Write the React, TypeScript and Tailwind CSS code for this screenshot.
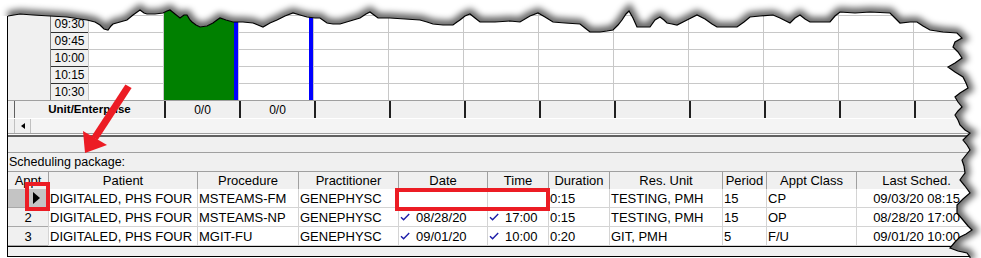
import React from "react";

// top edge + right edge of the torn-paper effect (x,y)
const topEdge: [number, number][] = [
  [8, 16], [20, 14], [33, 15], [50, 16], [67, 17], [80, 19], [87, 20], [95, 22], [100, 25], [104, 29], [108, 30],
  [111, 26], [113, 24], [120, 22], [127, 20], [133, 15], [140, 10], [144, 13], [147, 14], [155, 14], [163, 13],
  [167, 11], [170, 10], [175, 14], [180, 18], [184, 15], [187, 15], [190, 20], [192, 22], [196, 25], [200, 27],
  [207, 26], [213, 23], [217, 20], [220, 18], [226, 20], [233, 22], [243, 22], [253, 23], [258, 25], [263, 27],
  [270, 23], [277, 20], [285, 16], [293, 13], [300, 15], [307, 17], [315, 18], [320, 18], [327, 23], [333, 24],
  [340, 24], [350, 21], [360, 18], [366, 14], [370, 12], [374, 15], [378, 18], [390, 18], [405, 19], [420, 20],
  [427, 22], [433, 24], [443, 25], [453, 25], [457, 22], [460, 20], [465, 16], [470, 14], [475, 18], [480, 22],
  [495, 22], [510, 21], [520, 22], [530, 16], [538, 13], [545, 17], [553, 22], [565, 23], [580, 24], [585, 28],
  [590, 32], [600, 32], [607, 31], [613, 30], [618, 25], [622, 20], [626, 14], [629, 11], [633, 18], [637, 27],
  [645, 27], [650, 27], [655, 20], [660, 17], [664, 20], [667, 23], [672, 24], [677, 25], [687, 20], [697, 15],
  [705, 19], [712, 24], [717, 27], [727, 27], [737, 27], [744, 22], [750, 17], [760, 16], [773, 15], [780, 18],
  [790, 23], [795, 18], [800, 15], [805, 19], [810, 22], [820, 22], [830, 22], [835, 16], [840, 12], [855, 13],
  [870, 12], [890, 13], [895, 18], [900, 23], [910, 22], [917, 22], [923, 26], [930, 30], [943, 32], [957, 33],
  [962, 38],
];
const rightEdge: [number, number][] = [
  [955, 42], [953, 47], [958, 52], [962, 58], [955, 63], [948, 67], [955, 72], [963, 77], [966, 83], [968, 88],
  [960, 93], [955, 97], [958, 102], [962, 107], [958, 111], [955, 115], [958, 120], [960, 125], [965, 130],
  [970, 133], [966, 137], [963, 140], [967, 145], [970, 150], [966, 155], [962, 160], [964, 166], [965, 173],
  [962, 177], [960, 180], [965, 186], [970, 193], [963, 199], [957, 205], [957, 213], [963, 220], [968, 226],
  [972, 230], [966, 234], [960, 237], [955, 242], [950, 248], [958, 251], [967, 253], [970, 257], [970, 259],
];

const edge = [...topEdge, ...rightEdge];
const edgeStr = edge.map((p) => p.join(",")).join(" ");
const outsideStr = `0,0 0,16 ${edgeStr} 981,259 981,0`;

const times = ["09:15", "09:30", "09:45", "10:00", "10:15", "10:30"];
// heights of each time row, borders included
const rowH = ["h-[16px]", "h-[17px]", "h-[17px]", "h-[17px]", "h-[17px]", "h-[16px]"];

// grid columns in the top panel: fill + blue marker
const gridCols = [
  { green: false, blue: false },
  { green: true, blue: true },
  { green: false, blue: true },
  ...Array.from({ length: 9 }, () => ({ green: false, blue: false })),
];

const columns = [
  { key: "appt", label: "Appt", w: "w-[40px]" },
  { key: "patient", label: "Patient", w: "w-[149px]" },
  { key: "procedure", label: "Procedure", w: "w-[101px]" },
  { key: "pract", label: "Practitioner", w: "w-[100px]" },
  { key: "date", label: "Date", w: "w-[89px]" },
  { key: "time", label: "Time", w: "w-[61px]" },
  { key: "duration", label: "Duration", w: "w-[61px]" },
  { key: "unit", label: "Res. Unit", w: "w-[113px]" },
  { key: "period", label: "Period", w: "w-[44px]" },
  { key: "klass", label: "Appt Class", w: "w-[90px]" },
  { key: "last", label: "Last Sched.", w: "w-[120px]" },
];

type Row = {
  appt: string;
  patient: string;
  procedure: string;
  pract: string;
  date: string;
  time: string;
  duration: string;
  unit: string;
  period: string;
  klass: string;
  last: string;
};

const rows: Row[] = [
  { appt: "", patient: "DIGITALED, PHS FOUR", procedure: "MSTEAMS-FM", pract: "GENEPHYSC", date: "", time: "", duration: "0:15", unit: "TESTING, PMH", period: "15", klass: "CP", last: "09/03/20 08:15" },
  { appt: "2", patient: "DIGITALED, PHS FOUR", procedure: "MSTEAMS-NP", pract: "GENEPHYSC", date: "08/28/20", time: "17:00", duration: "0:15", unit: "TESTING, PMH", period: "15", klass: "OP", last: "08/28/20 17:00" },
  { appt: "3", patient: "DIGITALED, PHS FOUR", procedure: "MGIT-FU", pract: "GENEPHYSC", date: "09/01/20", time: "10:00", duration: "0:20", unit: "GIT, PMH", period: "5", klass: "F/U", last: "09/01/20 10:00" },
];

function Check() {
  return (
    <svg width="10" height="8" viewBox="0 0 10 8" className="shrink-0 self-start mt-[5px]">
      <path d="M1 4.2 L3.6 6.8 L9.2 1" fill="none" stroke="#1c1ca8" strokeWidth="1.4" />
    </svg>
  );
}

function TimeGrid() {
  return (
    <div className="flex h-[101px] border-b border-[#a0a0a0]">
      <div className="w-[43px] shrink-0 bg-[#f0f0f0] border-r border-[#808080]" />
      <div className="w-[37px] shrink-0 flex flex-col bg-[#f0f0f0]">
        {times.map((t, i) => (
          <div
            key={t}
            className={`${rowH[i]} flex items-center justify-center text-[12px] leading-none ${i < 5 ? "border-b border-[#303030]" : ""}`}
          >
            {t}
          </div>
        ))}
      </div>
      {gridCols.map((c, ci) => (
        <div key={ci} className="w-[75px] shrink-0 flex border-l border-[#c8c8c8] bg-white">
          {c.green ? (
            <div className="flex-1 bg-[#008000]" />
          ) : (
            <div className="flex-1 flex flex-col">
              {rowH.map((h, i) => (
                <div key={i} className={`${h} ${i < 5 ? "border-b border-[#c8c8c8]" : ""}`} />
              ))}
            </div>
          )}
          {c.blue && <div className="w-[4px] bg-[#0000ff]" />}
        </div>
      ))}
    </div>
  );
}

function UnitHeader() {
  return (
    <>
      <div className="flex h-[18px] bg-[#f0f0f0] border-b border-white">
        <div className="w-[6px] shrink-0" />
        <div className="w-[150px] shrink-0 border-l border-[#606060] flex items-center justify-center text-[11.5px] font-bold">
          Unit/Enterprise
        </div>
        {Array.from({ length: 11 }, (_, i) => (
          <div key={i} className="w-[75px] shrink-0 border-l-2 border-[#202020] flex items-center justify-center text-[12px]">
            {i < 2 ? "0/0" : ""}
          </div>
        ))}
      </div>
      <div className="flex h-[14px] bg-[#f0f0f0]">
        <div className="w-[6px] shrink-0" />
        <div className="w-[17px] shrink-0 border-l border-[#606060] border-r border-[#c0c0c0] flex items-center justify-center">
          <div className="w-0 h-0 border-y-[3.5px] border-y-transparent border-r-[4px] border-r-black" />
        </div>
        <div className="flex-1 bg-[#f4f4f4]" />
      </div>
    </>
  );
}

function Cell({ col, row }: { col: (typeof columns)[number]; row: Row }) {
  const v = row[col.key as keyof Row];
  if (col.key === "appt") {
    const selected = v === "";
    return (
      <div
        className={`${col.w} shrink-0 h-full flex items-center justify-center border-b border-[#a8a8a8] ${selected ? "bg-[#c4c4c4]" : "bg-[#f0f0f0]"}`}
      >
        {selected ? (
          <div className="ml-[16px] w-0 h-0 border-y-[6px] border-y-transparent border-l-[7px] border-l-black" />
        ) : (
          v
        )}
      </div>
    );
  }
  const isCheck = col.key === "date" || col.key === "time";
  return (
    <div
      className={`${col.w} shrink-0 h-full flex items-center border-l border-b border-[#d4d4d4] bg-white whitespace-nowrap overflow-hidden ${col.key === "last" ? "justify-center" : "pl-px"} ${isCheck ? "pl-[3px] gap-[6px]" : ""}`}
    >
      {isCheck && v !== "" && <Check />}
      {v}
    </div>
  );
}

export default function App() {
  return (
    <div className="relative w-[981px] h-[258px] bg-white overflow-hidden font-['Liberation_Sans',Arial,sans-serif] text-black">
      <div className="ml-[7px] w-[974px] h-[257px] border-l border-black flex flex-col bg-[#f0f0f0]">
        <TimeGrid />
        <UnitHeader />
        {/* splitter */}
        <div className="h-[4px] border-t border-[#a0a0a0] border-b-2 border-b-[#606060] bg-[#fafafa]" />
        <div className="h-[16px] border-b border-[#a0a0a0]" />
        <div className="h-[18px] flex items-center pl-px text-[12.5px] leading-none">Scheduling package:</div>
        {/* table */}
        <div className="flex flex-col text-[13px] leading-none">
          <div className="flex h-[18px] border-t border-[#a0a0a0] bg-[#f0f0f0]">
            {columns.map((c, i) => (
              <div
                key={c.key}
                className={`${c.w} shrink-0 flex items-center justify-center whitespace-nowrap overflow-hidden ${i > 0 ? "border-l border-[#a0a0a0]" : ""}`}
              >
                {c.label}
              </div>
            ))}
          </div>
          {rows.map((r, ri) => (
            <div key={ri} className="flex h-[19px]">
              {columns.map((c) => (
                <Cell key={c.key} col={c} row={r} />
              ))}
            </div>
          ))}
          <div className="h-px bg-black" />
          <div className="h-[10px] bg-[#f0f0f0] border-b border-black" />
        </div>
      </div>

      {/* annotations */}
      <svg className="absolute inset-0 pointer-events-none" width="981" height="258">
        <rect x="27" y="184" width="21" height="25" fill="none" stroke="#ec1c24" strokeWidth="4" />
        <rect x="397" y="190" width="151" height="19" fill="none" stroke="#ec1c24" strokeWidth="4" />
        <polygon points="125.4,84.5 131.6,88 97.7,140 91.5,136.5" fill="#ec1c24" />
        <polygon points="85,153 83,131 107,145" fill="#ec1c24" />
      </svg>

      {/* torn edge */}
      <svg className="absolute inset-0 pointer-events-none" width="981" height="258">
        <defs>
          <clipPath id="outside">
            <polygon points={outsideStr} />
          </clipPath>
          <filter id="soft" x="-5%" y="-20%" width="110%" height="140%">
            <feGaussianBlur stdDeviation="3" />
          </filter>
        </defs>
        <polygon points={outsideStr} fill="#ffffff" />
        <g clipPath="url(#outside)">
          <polyline points={edgeStr} fill="none" stroke="#000" strokeOpacity="0.6" strokeWidth="10" filter="url(#soft)" />
        </g>
        <polyline points={edgeStr} fill="none" stroke="#000" strokeWidth="1.2" />
      </svg>
    </div>
  );
}
